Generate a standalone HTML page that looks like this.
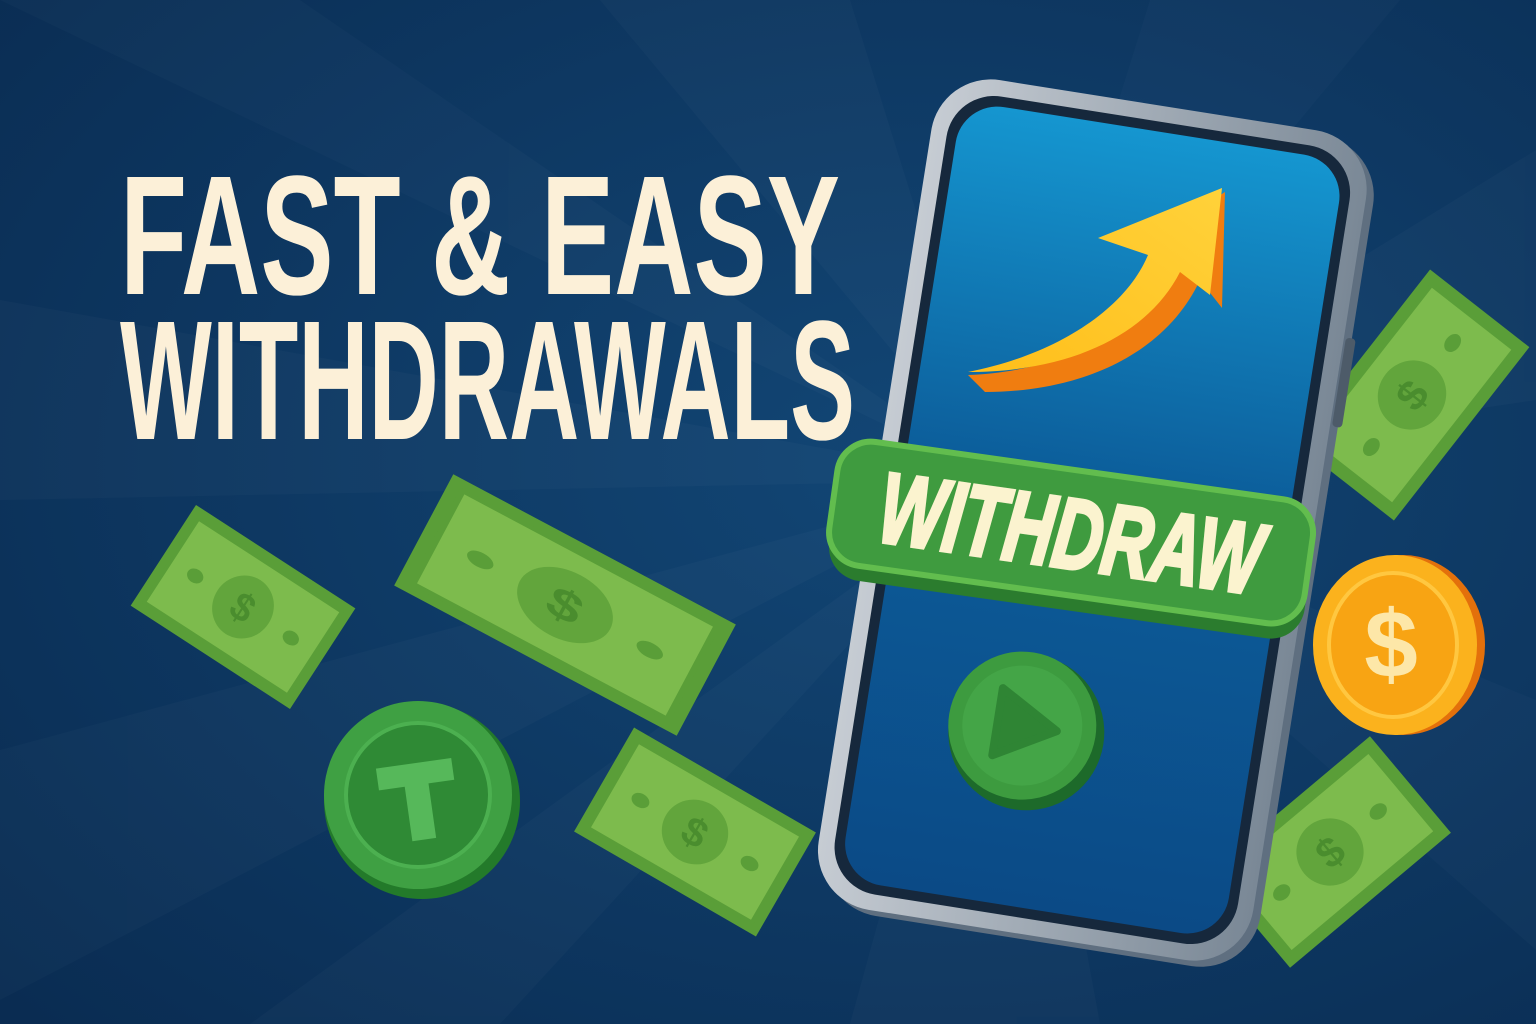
<!DOCTYPE html>
<html><head><meta charset="utf-8"><style>
html,body{margin:0;padding:0;width:1536px;height:1024px;overflow:hidden;background:#0e3863}
svg{display:block}
</style></head><body>
<svg width="1536" height="1024" viewBox="0 0 1536 1024" xmlns="http://www.w3.org/2000/svg">
<defs>
<radialGradient id="bg" cx="0.6" cy="0.45" r="0.8">
<stop offset="0" stop-color="#124675"/><stop offset="1" stop-color="#0a2c52"/>
</radialGradient>
<linearGradient id="scr" x1="0" y1="0" x2="0" y2="1">
<stop offset="0" stop-color="#1596d0"/><stop offset="0.45" stop-color="#0c5d9a"/><stop offset="1" stop-color="#0b4a86"/>
</linearGradient>
<linearGradient id="frame" x1="0" y1="0" x2="1" y2="0">
<stop offset="0" stop-color="#c6ccd3"/><stop offset="1" stop-color="#7a8896"/>
</linearGradient>
<linearGradient id="arrow" x1="0" y1="1" x2="1" y2="0">
<stop offset="0" stop-color="#ffbe1a"/><stop offset="1" stop-color="#ffd23a"/>
</linearGradient>
<g id="bill">
<rect x="-100" y="-60" width="200" height="120" fill="#5a9e38"/>
<rect x="-90" y="-50" width="180" height="100" fill="#7dbb4d" stroke="#5a9e38" stroke-width="4"/>
<circle r="32" fill="#62a53c"/>
<text x="0" y="14" font-family="Liberation Sans,sans-serif" font-weight="bold" font-size="40" text-anchor="middle" fill="#4a8d2e">$</text>
<ellipse cx="-60" cy="0" rx="9" ry="7" fill="#5a9e38"/>
<ellipse cx="60" cy="0" rx="9" ry="7" fill="#5a9e38"/>
</g>
</defs>
<rect width="1536" height="1024" fill="url(#bg)"/>
<g fill="#ffffff" opacity="0.02">
<polygon points="1000,480 0,0 300,0"/><polygon points="1000,480 600,0 850,0"/>
<polygon points="1000,480 1150,0 1400,0"/><polygon points="1000,480 1536,150 1536,400"/>
<polygon points="1000,480 1536,700 1536,950"/><polygon points="1000,480 1100,1024 850,1024"/>
<polygon points="1000,480 500,1024 250,1024"/><polygon points="1000,480 0,750 0,1000"/>
<polygon points="1000,480 0,300 0,500"/>
</g>

<use href="#bill" transform="translate(1412,395) rotate(-52) scale(1.1,1.05)"/>
<use href="#bill" transform="translate(1330,852) rotate(-40) scale(1.05,1.05)"/>

<g font-family="'Liberation Sans Narrow','Liberation Sans',sans-serif" font-weight="bold" fill="#fcf0d8" font-size="170">
<text x="120" y="294" textLength="720" lengthAdjust="spacingAndGlyphs">FAST &amp; EASY</text>
<text x="120" y="439" textLength="735" lengthAdjust="spacingAndGlyphs">WITHDRAWALS</text>
</g>

<use href="#bill" transform="translate(243,607) rotate(33) scale(0.95,1.0)"/>
<use href="#bill" transform="translate(565,605) rotate(28) scale(1.6,1.05)"/>
<use href="#bill" transform="translate(695,832) rotate(30) scale(1.05,1.0)"/>
<g transform="translate(418,795)">
<ellipse cx="4" cy="6" rx="98" ry="98" fill="#237a2a"/>
<circle r="94" fill="#3fa043"/>
<circle r="72" fill="#2f8a35" stroke="#4cb050" stroke-width="4"/>
<path d="M-38,-32 H38 V-10 H12 V45 H-12 V-10 H-38 Z" fill="#56b85a" transform="rotate(-8)"/>
</g>

<g transform="rotate(9 1092 522)">
<rect x="880" y="105" width="440" height="840" rx="60" fill="#5f6f80"/>
<rect x="872" y="100" width="440" height="840" rx="60" fill="url(#frame)"/>
<rect x="888" y="116" width="408" height="808" rx="48" fill="#16283c"/>
<rect x="898" y="126" width="388" height="788" rx="42" fill="url(#scr)"/>
<rect x="1314" y="300" width="10" height="90" rx="4" fill="#4d5b69"/>
<circle cx="1060" cy="740" r="78" fill="#1d6a2a"/>
<circle cx="1055" cy="734" r="74" fill="#3d9b3f"/>
<circle cx="1055" cy="734" r="60" fill="#44a547"/>
<path d="M1030,700 L1090,734 L1030,768 Z" fill="#2f8534" stroke-linejoin="round" stroke="#2f8534" stroke-width="8"/>
</g>
<!-- arrow -->
<path d="M968,375 C1060,372 1145,330 1178,262 L1140,246 L1225,192 L1222,308 L1200,280 C1165,355 1080,392 985,392 Z" fill="#f07d10"/>
<path d="M968,372 C1055,355 1125,310 1148,255 L1098,238 L1222,188 L1210,295 L1180,272 C1148,335 1070,372 968,372 Z" fill="url(#arrow)"/>

<g transform="rotate(8 1070 540)">
<rect x="832" y="482" width="480" height="128" rx="34" fill="#2b7c2e"/>
<rect x="830" y="470" width="480" height="125" rx="34" fill="#3f9b3f" stroke="#62bd4e" stroke-width="6"/>
<text x="1070" y="568" font-family="'Liberation Sans','DejaVu Sans',sans-serif" font-weight="bold" font-style="italic" font-size="100" text-anchor="middle" textLength="385" lengthAdjust="spacingAndGlyphs" fill="#fbf3cf" stroke="#fbf3cf" stroke-width="4" paint-order="stroke">WITHDRAW</text>
</g>

<g transform="translate(1395,645)">
<ellipse cx="8" cy="0" rx="82" ry="90" fill="#e3700b"/>
<ellipse cx="0" cy="0" rx="82" ry="90" fill="#fbb21d"/>
<ellipse cx="-2" cy="0" rx="64" ry="72" fill="#f8a413" stroke="#ffc740" stroke-width="4"/>
<text x="-4" y="32" font-family="Liberation Sans,sans-serif" font-weight="bold" font-size="96" text-anchor="middle" fill="#fde7a8">$</text>
</g>
</svg>
</body></html>
